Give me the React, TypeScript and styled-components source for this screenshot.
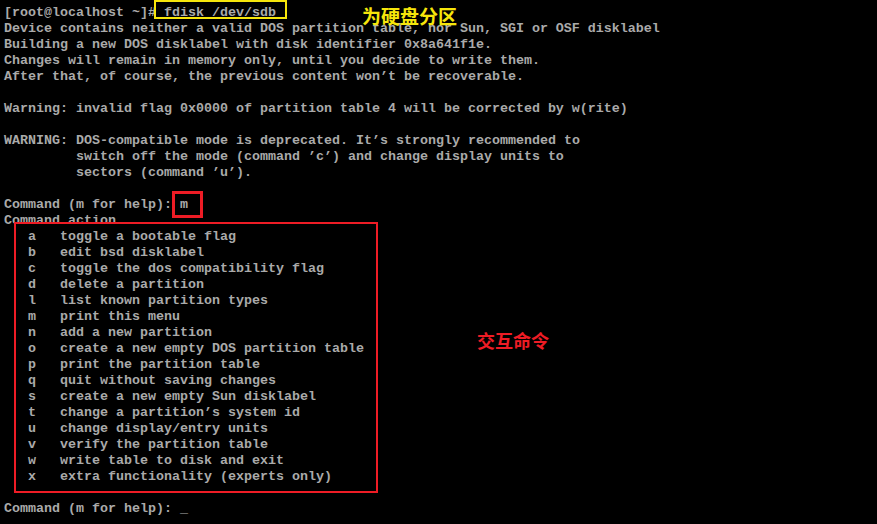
import React from "react";
import styled, { createGlobalStyle } from "styled-components";

const Global = createGlobalStyle`
  html, body { margin: 0; padding: 0; background: #000; }
  #root { width: 877px; height: 524px; overflow: hidden; }
`;

const Screen = styled.div`
  position: relative;
  box-sizing: border-box;
  width: 877px;
  height: 524px;
  padding: 5px 4px 0;
  background: #000;
  color: #aaaaaa;
  font-family: "Liberation Mono", "DejaVu Sans Mono", monospace;
  font-size: 13.33px;
  font-weight: 700;
  letter-spacing: 0;
  overflow: hidden;
`;

const Line = styled.div`
  height: 16px;
  line-height: 16px;
  white-space: pre;
`;

const Boxed = styled.span<{ $color: string; $w: number; $inset: string }>`
  position: relative;
  &::before {
    content: "";
    position: absolute;
    inset: ${(p) => p.$inset};
    border: ${(p) => p.$w}px solid ${(p) => p.$color};
    pointer-events: none;
  }
`;

const Menu = styled.div`
  position: relative;
  &::before {
    content: "";
    position: absolute;
    top: -7px;
    bottom: -8px;
    left: 10px;
    width: 364px;
    box-sizing: border-box;
    border: 2px solid #ee1c25;
    pointer-events: none;
  }
`;

const MenuRow = styled.div`
  display: grid;
  grid-template-columns: 32px auto;
  padding-left: 24px;
  height: 16px;
  line-height: 16px;
  white-space: pre;
`;

const Note = styled.div<{ $color: string; $x: number; $y: number; $size: number }>`
  position: absolute;
  left: ${(p) => p.$x}px;
  top: ${(p) => p.$y}px;
  color: ${(p) => p.$color};
  font-family: "Noto Sans CJK SC", "Noto Sans", sans-serif;
  font-weight: 700;
  font-size: ${(p) => p.$size}px;
  line-height: 1;
  letter-spacing: 0;
  white-space: nowrap;
`;

const menu: [string, string][] = [
  ["a", "toggle a bootable flag"],
  ["b", "edit bsd disklabel"],
  ["c", "toggle the dos compatibility flag"],
  ["d", "delete a partition"],
  ["l", "list known partition types"],
  ["m", "print this menu"],
  ["n", "add a new partition"],
  ["o", "create a new empty DOS partition table"],
  ["p", "print the partition table"],
  ["q", "quit without saving changes"],
  ["s", "create a new empty Sun disklabel"],
  ["t", "change a partition\u2019s system id"],
  ["u", "change display/entry units"],
  ["v", "verify the partition table"],
  ["w", "write table to disk and exit"],
  ["x", "extra functionality (experts only)"],
];

export default function App() {
  return (
    <>
      <Global />
      <Screen>
        <Line>
          {"[root@localhost ~]# "}
          <Boxed $color="#f6e60b" $w={2} $inset="-5px -11px 1px -10px">fdisk /dev/sdb</Boxed>
        </Line>
        <Line>Device contains neither a valid DOS partition table, nor Sun, SGI or OSF disklabel</Line>
        <Line>Building a new DOS disklabel with disk identifier 0x8a641f1e.</Line>
        <Line>Changes will remain in memory only, until you decide to write them.</Line>
        <Line>After that, of course, the previous content won{"\u2019"}t be recoverable.</Line>
        <Line> </Line>
        <Line>Warning: invalid flag 0x0000 of partition table 4 will be corrected by w(rite)</Line>
        <Line> </Line>
        <Line>WARNING: DOS-compatible mode is deprecated. It{"\u2019"}s strongly recommended to</Line>
        <Line>{"         switch off the mode (command \u2019c\u2019) and change display units to"}</Line>
        <Line>{"         sectors (command \u2019u\u2019)."}</Line>
        <Line> </Line>
        <Line>
          {"Command (m for help): "}
          <Boxed $color="#ee1c25" $w={3} $inset="-6px -15px -6px -8px">m</Boxed>
        </Line>
        <Line>Command action</Line>
        <Menu>
          {menu.map(([k, d]) => (
            <MenuRow key={k}>
              <span>{k}</span>
              <span>{d}</span>
            </MenuRow>
          ))}
        </Menu>
        <Line> </Line>
        <Line>{"Command (m for help): _"}</Line>
        <Note $color="#f6e60b" $x={362} $y={6} $size={19}>为硬盘分区</Note>
        <Note $color="#ee1c25" $x={477} $y={331} $size={18}>交互命令</Note>
      </Screen>
    </>
  );
}
